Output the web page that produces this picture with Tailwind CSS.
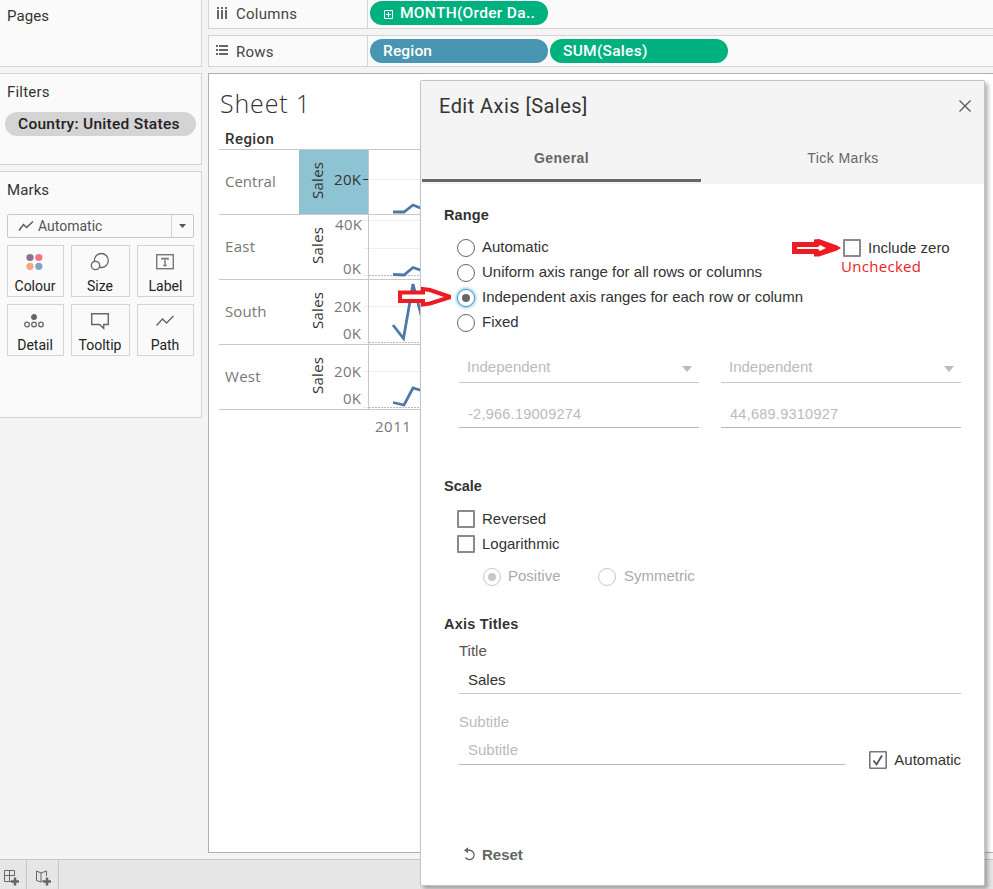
<!DOCTYPE html>
<html lang="en">
<head>
<meta charset="utf-8">
<title>Sheet 1</title>
<script src="https://cdn.jsdelivr.net/npm/@tailwindcss/browser@4"></script>
</head>
<body class="relative flex h-[889px] w-[993px] flex-col overflow-hidden bg-[#f4f4f4] font-[Roboto,sans-serif] text-[15px] text-[#333]">
  <div class="flex h-[859px] gap-[6px]">
    <!-- Side cards -->
    <aside class="flex w-[202px] shrink-0 flex-col gap-[6px]">
      <section class="h-[67px] border-r border-b border-[#d4d4d4] bg-[#fafafa] px-[7px] pt-[6px]">
        <h2 class="h-5 leading-5 tracking-[0.1px]">Pages</h2>
      </section>
      <section class="h-[92px] border-t border-r border-b border-[#d4d4d4] bg-[#fafafa] px-[5px] pt-[8px]">
        <h2 class="h-5 pl-[2px] leading-5 tracking-[0.2px]">Filters</h2>
        <div class="mt-[10px] flex h-6 w-[191px] items-center rounded-full bg-[#d4d4d4] pt-[2px] pl-[13px] text-[15.500px] font-medium tracking-[0.28px] text-[#222]">Country: United States</div>
      </section>
      <section class="h-[247px] border-t border-r border-b border-[#d4d4d4] bg-[#fafafa] px-[7px] pt-[8px]">
        <h2 class="h-5 leading-5 tracking-[0.1px]">Marks</h2>
        <div class="mt-[14px] flex h-6 w-[187px] items-center rounded-[2px] border border-[#c8c8c8] text-sm text-[#555]">
          <svg class="ml-[10px] h-3 w-4" viewBox="0 0 16 12" fill="none" stroke="#555" stroke-width="1.4"><path d="M1 10.500L5.500 4.500L8.500 7.500L15 1.500"/></svg>
          <span class="ml-1 grow">Automatic</span>
          <span class="flex h-full w-[22px] items-center justify-center border-l border-[#d4d4d4]"><svg class="h-1 w-[7px]" viewBox="0 0 7 4"><path d="M0 0H7L3.500 4Z" fill="#555"/></svg></span>
        </div>
        <div class="mt-[7px] grid grid-cols-[57px_59px_57px] gap-[7px] text-center text-sm leading-4 text-[#222]">
          <div class="h-[52px] border border-[#d4d4d4] pt-[6px]">
            <svg class="ml-[17px] h-5 w-5" viewBox="0 0 20 20"><circle cx="5" cy="5.500" r="3.600" fill="#867199"/><circle cx="13.800" cy="5.500" r="3.600" fill="#fb6f82"/><circle cx="5" cy="14.300" r="3.600" fill="#f5a67c"/><circle cx="13.800" cy="14.300" r="3.600" fill="#7ca3cf"/></svg>
            <div class="mt-[6px] -ml-px">Colour</div>
          </div>
          <div class="h-[52px] border border-[#d4d4d4] pt-[6px]">
            <svg class="ml-[18px] h-5 w-5" viewBox="0 0 20 20" fill="#fafafa" stroke="#666" stroke-width="1.300"><circle cx="11.300" cy="8.500" r="7"/><circle cx="5.500" cy="13.500" r="4.200"/></svg>
            <div class="mt-[6px] -ml-px">Size</div>
          </div>
          <div class="h-[52px] border border-[#d4d4d4] pt-[6px]">
            <svg class="ml-[17px] h-5 w-5" viewBox="0 0 20 20" fill="none" stroke="#777"><rect x="1.700" y="2.700" width="16.600" height="14" stroke-width="1.400"/><path d="M7 8V6.500H13V8M10 6.500V13.500M8.300 13.500H11.700" stroke-width="1.400"/></svg>
            <div class="mt-[6px]">Label</div>
          </div>
          <div class="h-[52px] border border-[#d4d4d4] pt-[6px]">
            <svg class="ml-[16px] h-5 w-5" viewBox="0 0 20 20" fill="none" stroke="#666" stroke-width="1.300"><circle cx="10" cy="6" r="2.300" fill="#666"/><circle cx="3" cy="13.500" r="2.300"/><circle cx="10" cy="13.500" r="2.300"/><circle cx="17" cy="13.500" r="2.300"/></svg>
            <div class="mt-[6px] -ml-px">Detail</div>
          </div>
          <div class="h-[52px] border border-[#d4d4d4] pt-[6px]">
            <svg class="ml-[18px] h-5 w-5" viewBox="0 0 20 20" fill="none" stroke="#666" stroke-width="1.400"><path d="M1.700 2.700H18.300V13.500H13.700V17.300L9.500 13.500H1.700Z"/></svg>
            <div class="mt-[6px] -ml-px">Tooltip</div>
          </div>
          <div class="h-[52px] border border-[#d4d4d4] pt-[6px]">
            <svg class="ml-[17px] h-5 w-5" viewBox="0 0 20 20" fill="none" stroke="#666" stroke-width="1.400"><path d="M1.500 14.500L7.500 8L11.500 12L18.500 5"/></svg>
            <div class="mt-[6px] -ml-px">Path</div>
          </div>
        </div>
      </section>
    </aside>

    <main class="flex w-[785px] shrink-0 flex-col">
      <div class="flex h-[29px] items-center border-b border-l border-[#d4d4d4] bg-[#fafafa]">
        <div class="flex h-full w-[159px] items-center border-r border-[#d4d4d4] pl-[8px] text-[#444]">
          <svg class="mb-[3px] h-3 w-3" viewBox="0 0 12 12" fill="#666"><path d="M0 0h2v2H0zM4 0h2v2H4zM8 0h2v2H8zM0 3h2v9H0zM4 3h2v9H4zM8 3h2v9H8z"/></svg>
          <span class="ml-[7px] tracking-[0.25px]">Columns</span>
        </div>
        <div class="mb-[2px] ml-[2px] flex h-6 w-[178px] items-center rounded-full bg-[#00b180] pt-[2px] text-white">
          <svg class="ml-[14px] h-[9px] w-[9px]" viewBox="0 0 9 9" fill="none" stroke="#fff"><path d="M.5 .5H8.500V8.500H.5ZM2 4.500H7M4.500 2V7"/></svg>
          <span class="ml-[7px] text-[15.500px] font-medium tracking-[0.3px]">MONTH(Order Da..</span>
        </div>
      </div>
      <div class="mt-[6px] flex h-8 items-center border-y border-l border-[#d4d4d4] bg-[#fafafa]">
        <div class="flex h-full w-[159px] items-center border-r border-[#d4d4d4] pt-[2px] pl-[7px] text-[#444]">
          <svg class="mb-[4px] h-[10px] w-3" viewBox="0 0 12 10" fill="#666"><path d="M0 0h2v2H0zM0 4h2v2H0zM0 8h2v2H0zM3 0h9v2H3zM3 4h9v2H3zM3 8h9v2H3z"/></svg>
          <span class="ml-[8px] tracking-[0.2px]">Rows</span>
        </div>
        <div class="ml-[2px] flex h-6 w-[178px] items-center rounded-full bg-[#4996b2] pt-[2px] pl-[13px] text-[15.500px] font-medium tracking-[0.15px] text-white">Region</div>
        <div class="ml-[2px] flex h-6 w-[178px] items-center rounded-full bg-[#00b180] pt-[2px] pl-[13px] text-[15.500px] font-medium tracking-[0.28px] text-white">SUM(Sales)</div>
      </div>

      <!-- Worksheet -->
      <div class="mt-[6px] h-[780px] border-y border-l border-[#b0b0b0] bg-white pl-[10px] font-['Open_Sans',sans-serif]">
        <h1 class="mt-[11px] h-9 pl-[1px] text-[25px] leading-9 font-light tracking-[0.85px] text-[#333]">Sheet 1</h1>
        <div class="mt-[8px] h-5 pl-[6px] font-[Roboto,sans-serif] leading-5 font-medium tracking-[0.45px]">Region</div>
        <div class="w-[202px] border-t border-[#c8c8c8] text-[15px] text-[#777]">
          <div class="flex h-[65px] items-center border-b border-[#c8c8c8]">
            <div class="w-20 pb-[2px] pl-[6px]">Central</div>
            <svg class="h-16 w-[122px]" viewBox="0 0 122 64" fill="none">
              <path d="M0 0H69V64H0Z" fill="#8dc3d2"/><path d="M69.500 0V64" stroke="#c8c8c8"/><path d="M70 29.500H122" stroke="#eee"/><path d="M64 29.500H69" stroke="#333"/>
              <text x="23.500" y="49" transform="rotate(-90 23.500 49)" fill="#333" textLength="37">Sales</text><text x="35" y="35" fill="#333" textLength="27">20K</text>
              <path d="M94 62H105L114 55L124 59" stroke="#4e79a7" stroke-width="2.800"/>
            </svg>
          </div>
          <div class="flex h-[65px] items-center border-b border-[#c8c8c8]">
            <div class="w-20 pb-[2px] pl-[6px] tracking-[0.3px]">East</div>
            <svg class="h-16 w-[122px]" viewBox="0 0 122 64" fill="none">
              <path d="M64 5.500H122M64 33.500H122M64 60.500H69" stroke="#eee"/><path d="M69.500 0V64" stroke="#c8c8c8"/><path d="M70 60.500H122" stroke="#bbb" stroke-dasharray="2 1"/>
              <text x="23.500" y="49" transform="rotate(-90 23.500 49)" fill="#333" textLength="37">Sales</text><text x="36" y="15" fill="#777" textLength="27">40K</text><text x="44" y="59" fill="#777" textLength="18">0K</text>
              <path d="M94 59.500L105 60L114 52.500L124 56" stroke="#4e79a7" stroke-width="2.800"/>
            </svg>
          </div>
          <div class="flex h-[65px] items-center border-b border-[#c8c8c8]">
            <div class="w-20 pb-[2px] pl-[6px] tracking-[0.1px]">South</div>
            <svg class="h-16 w-[122px]" viewBox="0 0 122 64" fill="none">
              <path d="M64 26.500H122M64 62.500H69" stroke="#eee"/><path d="M69.500 0V64" stroke="#c8c8c8"/><path d="M70 62.500H122" stroke="#bbb" stroke-dasharray="2 1"/>
              <text x="23.500" y="49" transform="rotate(-90 23.500 49)" fill="#333" textLength="37">Sales</text><text x="35" y="32" fill="#777" textLength="27">20K</text><text x="44" y="59" fill="#777" textLength="18">0K</text>
              <path d="M94 45L104.500 58.500L114 4L124 42" stroke="#4e79a7" stroke-width="2.800"/>
            </svg>
          </div>
          <div class="flex h-[65px] items-center border-b border-[#c8c8c8]">
            <div class="w-20 pb-[2px] pl-[6px] tracking-[0.3px]">West</div>
            <svg class="h-16 w-[122px]" viewBox="0 0 122 64" fill="none">
              <path d="M64 26.500H122M64 62.500H69" stroke="#eee"/><path d="M69.500 0V64" stroke="#c8c8c8"/><path d="M70 62.500H122" stroke="#bbb" stroke-dasharray="2 1"/>
              <text x="23.500" y="49" transform="rotate(-90 23.500 49)" fill="#333" textLength="37">Sales</text><text x="35" y="32" fill="#777" textLength="27">20K</text><text x="44" y="59" fill="#777" textLength="18">0K</text>
              <path d="M94 57.500L105 60L114 43L124 46" stroke="#4e79a7" stroke-width="2.800"/>
            </svg>
          </div>
          <div class="pt-[5px] pl-[156px] tracking-[0.5px]">2011</div>
        </div>
      </div>
    </main>
  </div>

  <footer class="flex h-[30px] border-t border-[#c8c8c8] bg-[#e6e6e6]">
    <div class="w-[27px] border-r border-[#c8c8c8] pt-[10px] pl-[4px]">
      <svg class="h-4 w-4" viewBox="0 0 16 16" fill="none" stroke="#666"><path d="M7 11.500H.5V.5H10.500V6M.5 5.500H10.500M5.500 .5V11.500"/><path d="M7 11.500H15M11 7.500V15.500" stroke-width="2.500"/></svg>
    </div>
    <div class="w-8 border-r border-[#c8c8c8] pt-[10px] pl-[8px]">
      <svg class="h-4 w-4" viewBox="0 0 16 16" fill="none" stroke="#666"><path d="M8 10.500L6 12L1.500 10.500V1L6 3L11.500 1V6M6 3V12"/><path d="M8 11.500H16M12 7.500V15.500" stroke-width="2.500"/></svg>
    </div>
  </footer>

  <!-- Edit Axis dialog floats over the workbook -->
  <div class="absolute top-20 left-[420px] flex h-[806px] w-[565px] flex-col rounded-[2px] border border-[#c4c4c4] bg-white font-['Liberation_Sans',Arial,sans-serif] text-[#333] shadow-[3px_3px_4px_rgba(0,0,0,0.3)]">
    <header class="flex h-[103px] flex-col justify-between bg-[#f4f4f4]">
      <div class="flex items-center justify-between pt-[11px] pr-[13px] pl-[18px]">
        <h2 class="h-7 font-[Roboto,sans-serif] text-xl leading-7 tracking-[0.45px]">Edit Axis [Sales]</h2>
        <svg class="h-3 w-3" viewBox="0 0 12 12" stroke="#555" stroke-width="1.200"><path d="M.5 .5L11.500 11.500M11.500 .5L.5 11.500"/></svg>
      </div>
      <div class="flex h-[46px] pb-[2px] pl-[1px] text-center text-sm leading-10 text-[#666]">
        <div class="w-[279px] border-b-3 border-[#666] font-bold tracking-[0.4px]">General</div>
        <div class="grow pl-px tracking-[0.45px]">Tick Marks</div>
      </div>
    </header>

    <div class="flex flex-col pl-[23px] text-[15px] leading-5">
      <h3 class="mt-[21px] text-[14.500px] font-bold tracking-[0.15px]">Range</h3>
      <div class="mt-[9px] flex justify-between pr-[33px]">
        <div class="pl-[13px]">
          <div class="flex h-[25px] items-center gap-[7px]"><i class="mt-[2px] size-[18px] rounded-full border border-[#666]"></i>Automatic</div>
          <div class="flex h-[25px] items-center gap-[7px]"><i class="mt-[2px] size-[18px] rounded-full border border-[#666]"></i><span>Uniform axis range for all rows or columns</span></div>
          <div class="flex h-[25px] items-center gap-[7px]"><i class="mt-[2px] flex size-[18px] items-center justify-center rounded-full border border-[#4996b2] shadow-[0_0_3px_1px_#7fbcf0]"><b class="size-2 rounded-full bg-[#666]"></b></i><span>Independent axis ranges for each row or column</span></div>
          <div class="flex h-[25px] items-center gap-[7px]"><i class="mt-[2px] size-[18px] rounded-full border border-[#666]"></i>Fixed</div>
        </div>
        <div class="w-[108px]">
          <div class="mt-[4px] flex h-5 items-center gap-[7px]"><i class="size-[18px] rounded-[1px] border-2 border-[#8a8a8a]"></i>Include zero</div>
          <div class="-mt-[2px] -ml-[2px] h-5 font-['Open_Sans',sans-serif] text-[15px] leading-5 tracking-[0.3px] text-[#ed1c24]">Unchecked</div>
        </div>
      </div>
      <div class="mt-[18px] grid grid-cols-[240px_240px] gap-x-[22px] pl-[15px] text-[#bbb]">
        <div class="flex h-[31px] items-center justify-between border-b border-[#c8c8c8] pr-[7px] pl-[8px]">Independent<svg class="mt-[3px] h-[6px] w-[10px]" viewBox="0 0 10 6"><path d="M0 0H10L5 6Z" fill="#bbb"/></svg></div>
        <div class="flex h-[31px] items-center justify-between border-b border-[#c8c8c8] pr-[7px] pl-[8px]">Independent<svg class="mt-[3px] h-[6px] w-[10px]" viewBox="0 0 10 6"><path d="M0 0H10L5 6Z" fill="#bbb"/></svg></div>
        <div class="mt-[13px] flex h-8 items-center border-b border-[#b8b8b8] pt-[4px] pl-[9px] text-[14.500px] tracking-[0.25px]">-2,966.19009274</div>
        <div class="mt-[13px] flex h-8 items-center border-b border-[#b8b8b8] pt-[4px] pl-[9px] text-[14.500px] tracking-[0.25px]">44,689.9310927</div>
      </div>

      <h3 class="mt-[48px] text-[14.500px] font-bold">Scale</h3>
      <div class="mt-[10px] pl-[13px]">
        <div class="flex h-[25px] items-center gap-[7px]"><i class="size-[18px] rounded-[1px] border-2 border-[#8a8a8a]"></i>Reversed</div>
        <div class="flex h-[25px] items-center gap-[7px]"><i class="size-[18px] rounded-[1px] border-2 border-[#8a8a8a]"></i>Logarithmic</div>
        <div class="mt-[7px] flex h-[25px] items-center pl-[26px] text-[#aaa]">
          <i class="mt-[2px] flex size-[18px] items-center justify-center rounded-full border border-[#c8c8c8]"><b class="size-2 rounded-full bg-[#c8c8c8]"></b></i><span class="ml-[7px] w-[90px]">Positive</span>
          <i class="mt-[2px] size-[18px] rounded-full border border-[#c8c8c8]"></i><span class="ml-2">Symmetric</span>
        </div>
      </div>

      <h3 class="mt-[26px] text-[14.500px] font-bold tracking-[0.2px]">Axis Titles</h3>
      <div class="mt-[7px] w-[517px] pl-[15px]">
        <div class="text-[#555]">Title</div>
        <div class="mt-[5px] h-[28px] border-b border-[#c8c8c8] pt-[4px] pl-[9px]">Sales</div>
        <div class="mt-[18px] flex justify-between text-[#bbb]">
          <div class="w-[386px]">
            <div>Subtitle</div>
            <div class="mt-[4px] h-[29px] border-b border-[#b8b8b8] pt-[4px] pl-[9px]">Subtitle</div>
          </div>
          <div class="mt-[38px] flex h-5 items-center gap-[7px] text-[#333]">
            <svg class="size-[18px]" viewBox="0 0 18 18" fill="none" stroke="#777"><rect x=".8" y=".8" width="16.400" height="16.400" rx=".5" stroke-width="1.600"/><path d="M4.500 9.500L7.500 13.500L13 4.500" stroke="#555" stroke-width="1.800"/></svg>Automatic
          </div>
        </div>
      </div>
      <button class="mt-[75px] flex h-5 items-center self-start pl-[20px] text-[15px] font-bold text-[#666]">
        <svg class="mb-[2px] h-[14px] w-3" viewBox="0 0 12 14" fill="none" stroke="#666" stroke-width="1.400"><path d="M2 3.300H6A4.700 4.700 0 1 1 1.500 10.500"/><path d="M0 3.300L4 .3V6.300Z" fill="#666" stroke="none"/></svg>
        <span class="ml-[6px]">Reset</span>
      </button>
    </div>
  </div>

  <!-- Callout arrows -->
  <svg class="absolute top-[286px] left-[398px] h-[22px] w-[56px]" viewBox="0 0 56 22" fill="#fff" stroke="#ed1c24" stroke-width="4"><path d="M2 6.500H25V3L32 4L51 10.500V11.500L32 17.500L25 18.500V15H2Z"/></svg>
  <svg class="absolute top-[238px] left-[792px] h-5 w-[50px]" viewBox="0 0 50 20" fill="#ed1c24"><path d="M0 4H22V1.500L27 1L45 7.500L49 10L45 12.500L27 18.500L22 18.500V16H0Z"/><path d="M5 9H26L28 7L34 10L28 13L26 11H5Z" fill="#fff"/></svg>
</body>
</html>
